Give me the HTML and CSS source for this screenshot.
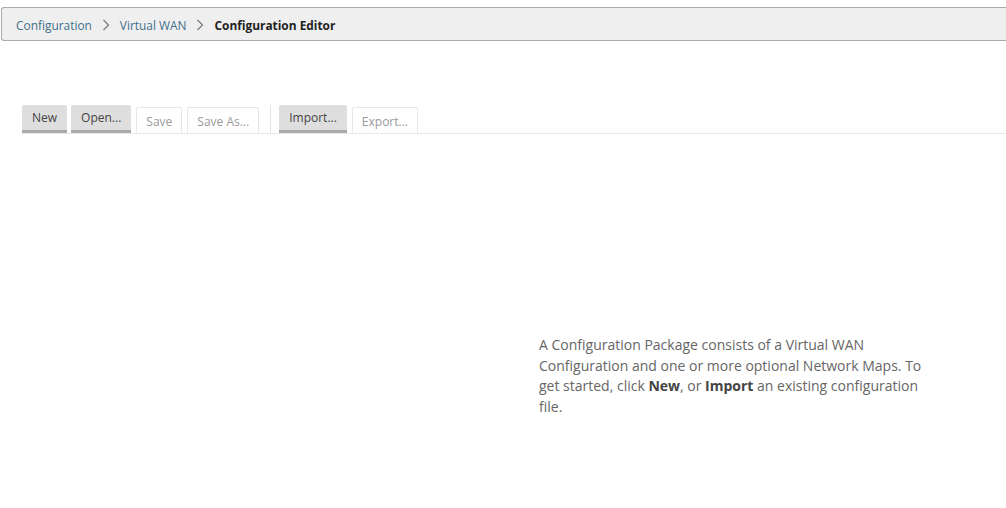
FILE: index.html
```html
<!DOCTYPE html>
<html>
<head>
<meta charset="utf-8">
<link rel="stylesheet" href="styles.css">
</head>
<body>
<nav class="crumbs">
  <a class="crumb-link">Configuration</a>
  <svg class="chev" width="8" height="12" viewBox="0 0 8 12"><path d="M1.5 1 L6.5 6 L1.5 11" fill="none" stroke="#7a7a7a" stroke-width="1.2"/></svg>
  <a class="crumb-link">Virtual WAN</a>
  <svg class="chev" width="8" height="12" viewBox="0 0 8 12"><path d="M1.5 1 L6.5 6 L1.5 11" fill="none" stroke="#7a7a7a" stroke-width="1.2"/></svg>
  <span class="crumb-current">Configuration Editor</span>
</nav>
<div class="toolbar">
  <button class="btn btn-active">New</button>
  <button class="btn btn-active">Open...</button>
  <button class="btn btn-disabled">Save</button>
  <button class="btn btn-disabled">Save As...</button>
  <span class="sep"></span>
  <button class="btn btn-active">Import...</button>
  <button class="btn btn-disabled">Export...</button>
</div>
<p class="intro">A Configuration Package consists of a Virtual WAN Configuration and one or more optional Network Maps. To get started, click <b>New</b>, or <b>Import</b> an existing configuration file.</p>
</body>
</html>
```
FILE: styles.css
```css
html, body {
  margin: 0;
  padding: 0;
  background: #ffffff;
}
body {
  font-family: "Open Sans", "Noto Sans", sans-serif;
  width: 1006px;
  overflow: hidden;
}
.crumbs {
  margin: 7px 0 0 1px;
  border: 1px solid #a7abaf;
  border-right: none;
  border-radius: 3px 0 0 3px;
  background: #efefef;
  display: flex;
  align-items: center;
  padding: 1px 0 0 14px;
  font-size: 11.9px;
  box-sizing: border-box;
  height: 34px;
}
.crumb-link {
  color: #3f6f8c;
}
.chev {
  margin: 0 10px 0 10px;
}
.crumb-current {
  color: #222;
  font-weight: 700;
}
.toolbar {
  margin: 64px 0 0 22px;
  display: flex;
  align-items: flex-end;
  border-bottom: 1px solid #e9e9e9;
}
.btn {
  font-family: "Open Sans", sans-serif;
  font-size: 12px;
  padding: 0 10px;
  margin: 0 4px 0 0;
  box-sizing: border-box;
  cursor: default;
}
.btn-active {
  height: 28px;
  background: #dedede;
  color: #444;
  border: none;
  border-bottom: 3px solid #a9a9a9;
  border-radius: 2px 2px 0 0;
  padding-top: 0;
}
.btn-disabled {
  height: 26px;
  background: #fff;
  color: #999;
  border: 1px solid #e7e7e7;
  border-bottom: none;
  border-radius: 2px 2px 0 0;
  margin-left: 1px;
  padding: 2px 9px 0;
}
.sep {
  width: 1px;
  height: 28px;
  background: #e4e4e4;
  margin: 0 8px 0 7px;
}
.intro {
  margin: 201px 0 0 539px;
  width: 395px;
  font-size: 14px;
  line-height: 20.7px;
  color: #666;
}
.intro b {
  color: #444;
}
```
